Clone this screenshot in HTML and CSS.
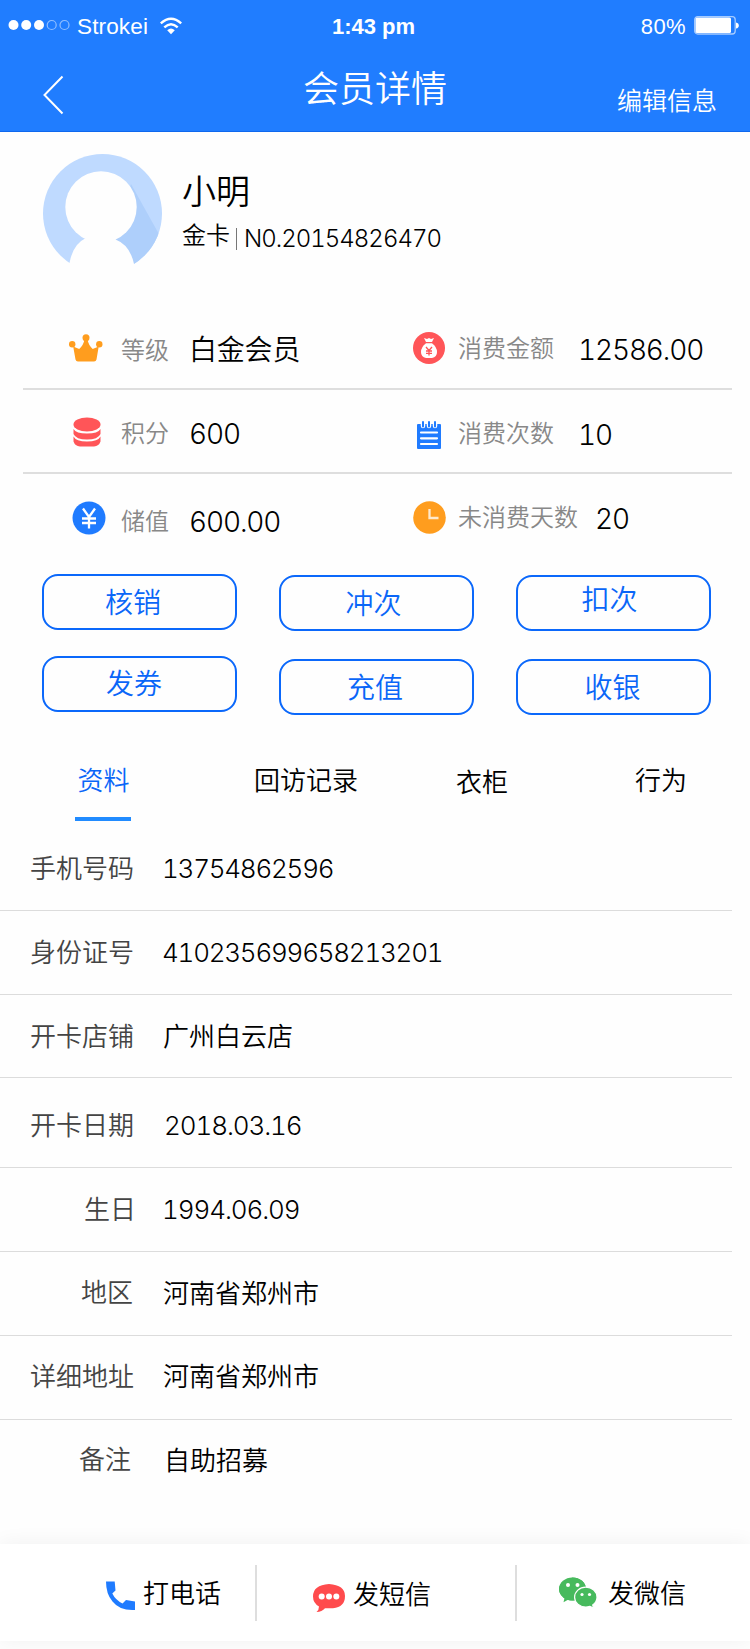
FILE: index.html
```html
<!DOCTYPE html>
<html lang="zh-CN">
<head>
    <meta charset="UTF-8">
    <meta name="viewport" content="width=device-width, initial-scale=1.0">
    <title>会员详情</title>
    <link rel="stylesheet" href="styles.css">
</head>
<body>
    <header class="header">
        <div class="status-bar">
            <div class="carrier">
                <svg class="signal" width="62" height="12" viewBox="0 0 62 12">
                    <g fill="#fff">
                        <circle cx="5.5" cy="6" r="5"/>
                        <circle cx="18.2" cy="6" r="5"/>
                        <circle cx="31" cy="6" r="5"/>
                    </g>
                    <g fill="none" stroke="#fff" stroke-opacity=".5" stroke-width="1.2">
                        <circle cx="43.7" cy="6" r="4.5"/>
                        <circle cx="56.5" cy="6" r="4.5"/>
                    </g>
                </svg>
                <span>Strokei</span>
                <svg class="wifi" width="22" height="18" viewBox="0 0 22 18">
                    <g fill="none" stroke="#fff" stroke-width="2.4">
                        <path d="M.8 6.4Q11-3 21.200 6.400"/>
                        <path d="M4.300 10.300Q11 4 17.700 10.300"/>
                    </g>
                    <path fill="#fff" d="M7.200 13.200Q11 10 14.800 13.200L11 17.200z"/>
                </svg>
            </div>
            <div class="clock">1:43 pm</div>
            <div class="battery">
                <span>80%</span>
                <svg width="45" height="19" viewBox="0 0 45 19">
                    <rect x=".7" y=".7" width="40.500" height="17.300" rx="3" fill="none" stroke="#fff" stroke-opacity=".6" stroke-width="1.300"/>
                    <rect x="1.500" y="1.500" width="35.500" height="15.500" rx="1.500" fill="#fff"/>
                    <path fill="#fff" d="M42 6.500q2.800.5 2.800 3t-2.800 3z"/>
                </svg>
            </div>
        </div>
        <nav class="nav">
            <a class="back" href="#">
                <svg width="21" height="40" viewBox="0 0 21 40">
                    <path d="M19.500 1.500L1.500 20l18 18.500" fill="none" stroke="#fff" stroke-width="2"/>
                </svg>
            </a>
            <h1>会员详情</h1>
            <a class="edit" href="#">编辑信息</a>
        </nav>
    </header>

    <section class="profile">
        <svg class="avatar" width="120" height="111" viewBox="0 0 120 111">
            <defs>
                <clipPath id="round"><circle cx="59.500" cy="59.500" r="59.500"/></clipPath>
            </defs>
            <g clip-path="url(#round)">
                <rect width="120" height="111" fill="#bfdaff"/>
                <path fill="#aecffb" d="M88 30L117 82V111H60z"/>
            </g>
            <circle cx="58" cy="53" r="35.700" fill="#fefefe"/>
            <path fill="#fefefe" d="M43 84Q30 90 26.500 109L21 120H98L91 110Q87 91 72.500 85.500L76 80H38z"/>
        </svg>
        <div class="info">
            <div class="name">小明</div>
            <div class="card">
                <span class="card-type">金卡</span>
                <span class="card-no">N0.20154826470</span>
            </div>
        </div>
    </section>

    <section class="stats">
        <div class="stat-row">
            <div class="stat">
                <svg class="crown" width="34" height="28" viewBox="0 0 34 28">
                    <g fill="#ff9d1e">
                        <circle cx="3.200" cy="10.300" r="3.200"/>
                        <circle cx="17" cy="3.700" r="3.500"/>
                        <circle cx="30.300" cy="10.300" r="3.200"/>
                        <path d="M4.200 12.500l6 2.500Q14.500 11 15.400 6h3.200Q19.500 11 23.700 15l6-2.500L27.500 25.500Q27 27.500 25 27.500H9Q7 27.500 6.500 25.500z"/>
                    </g>
                </svg>
                <span class="label down">等级</span>
                <span class="value level">白金会员</span>
            </div>
            <div class="stat">
                <svg class="bag" width="32" height="32" viewBox="0 0 32 32">
                    <circle cx="16" cy="16" r="16" fill="#ff5558"/>
                    <path fill="#fff" d="M11 6l3 1 2-1 2 1 3-1-2 4h-6z"/>
                    <path fill="#fff" d="M13 11.200h6Q24 15 24 20t-5 6h-6q-5-1-5-6t5-8.800z"/>
                    <path d="M13 15l3 3.500 3-3.500M13 19h6M13 21.300h6M16 18.500v5" fill="none" stroke="#ff5558" stroke-width="1.300"/>
                </svg>
                <span class="label up">消费金额</span>
                <span class="value">12586.00</span>
            </div>
        </div>
        <div class="stat-row">
            <div class="stat">
                <svg class="coins" width="28" height="30" viewBox="0 0 28 30">
                    <g fill="#ff5558">
                        <ellipse cx="14" cy="7.500" rx="13.500" ry="7"/>
                        <path d="M.5 12Q3 16.500 14 16.500T27.500 12v5Q25 22.500 14 22.500T.5 17z"/>
                        <path d="M.5 19.500Q3 24.500 14 24.500T27.500 19.500v5Q26 29 21 29.500H7Q2 29 .5 24.500z"/>
                    </g>
                </svg>
                <span class="label">积分</span>
                <span class="value">600</span>
            </div>
            <div class="stat">
                <svg class="notebook" width="24" height="28" viewBox="0 0 24 28">
                    <path fill="#1f7bff" d="M1 3h22q1 0 1 1v23q0 1-1 1H1q-1 0-1-1V4q0-1 1-1z"/>
                    <g fill="none" stroke-linecap="round">
                        <path d="M6 2v3M12 2v3M18 2v3" stroke="#fefefe" stroke-width="4.500"/>
                        <path d="M6 1v4.500M12 1v4.500M18 1v4.500" stroke="#1f7bff" stroke-width="2"/>
                        <path d="M4 11.500h16M4 17.300h16M4 23h16" stroke="#fff" stroke-width="2.200"/>
                    </g>
                </svg>
                <span class="label">消费次数</span>
                <span class="value down">10</span>
            </div>
        </div>
        <div class="stat-row last">
            <div class="stat">
                <svg class="yen" width="34" height="34" viewBox="0 0 34 34">
                    <circle cx="17" cy="17" r="16.500" fill="#1f7bff"/>
                    <path d="M11 7.500l6 8.500 6-8.500M10 17.500h14M10 22h14M17 16v11.500" fill="none" stroke="#fff" stroke-width="2.300"/>
                </svg>
                <span class="label">储值</span>
                <span class="value">600.00</span>
            </div>
            <div class="stat">
                <svg class="time" width="33" height="33" viewBox="0 0 33 33">
                    <circle cx="16.500" cy="16.500" r="16.300" fill="#ff9d1e"/>
                    <path d="M16.500 8v9h9" fill="none" stroke="#ffe9cc" stroke-width="2.300"/>
                </svg>
                <span class="label idle">未消费天数</span>
                <span class="value idle-days">20</span>
            </div>
        </div>
    </section>

    <section class="actions">
        <div class="action-col">
            <a class="btn verify" href="#">核销</a>
            <a class="btn coupon" href="#">发券</a>
        </div>
        <div class="action-col">
            <a class="btn add" href="#">冲次</a>
            <a class="btn recharge" href="#">充值</a>
        </div>
        <div class="action-col">
            <a class="btn deduct" href="#">扣次</a>
            <a class="btn cashier" href="#">收银</a>
        </div>
    </section>

    <nav class="tabs">
        <a class="tab active" href="#">资料</a>
        <a class="tab visits" href="#">回访记录</a>
        <a class="tab closet" href="#">衣柜</a>
        <a class="tab behavior" href="#">行为</a>
    </nav>

    <dl class="details">
        <div class="row"><dt>手机号码</dt><dd class="num">13754862596</dd></div>
        <div class="row"><dt>身份证号</dt><dd class="num">410235699658213201</dd></div>
        <div class="row store"><dt>开卡店铺</dt><dd>广州白云店</dd></div>
        <div class="row date"><dt>开卡日期</dt><dd class="num">2018.03.16</dd></div>
        <div class="row birthday"><dt>生日</dt><dd class="num">1994.06.09</dd></div>
        <div class="row region"><dt>地区</dt><dd>河南省郑州市</dd></div>
        <div class="row address"><dt>详细地址</dt><dd>河南省郑州市</dd></div>
        <div class="row remark"><dt>备注</dt><dd>自助招募</dd></div>
    </dl>

    <footer class="footer">
        <a class="contact call" href="#">
            <svg width="30" height="30" viewBox="0 0 30 30">
                <path fill="#1f7bff" d="M0 .5H8.700L9.500 9.500 6.300 12.500Q9.500 19 16.500 22.500L20 19l9 1.500V29Q14 30 6.500 20.500 0 13 0 .5z"/>
            </svg>
            <span>打电话</span>
        </a>
        <a class="contact sms" href="#">
            <svg width="32" height="29" viewBox="0 0 32 29">
                <path fill="#ff4b4d" d="M16 0q16 1 16 12T20 24.300h-8Q9 28 3.500 28 6 26 6 22.500 0 19 0 12.500 0 1 16 0z"/>
                <g fill="#fff">
                    <circle cx="8.700" cy="12.500" r="3"/>
                    <circle cx="16" cy="12.500" r="3"/>
                    <circle cx="23.300" cy="12.500" r="3"/>
                </g>
            </svg>
            <span>发短信</span>
        </a>
        <a class="contact wechat" href="#">
            <svg width="38" height="32" viewBox="0 0 38 32">
                <g fill="#47ba5d">
                    <path d="M13.500.5C21 .5 27 5.500 27 12s-6 11.500-13.500 11.500q-2.500 0-4.500-.7l-4.500 2.400 1-4.200Q0 17.500 0 12 0 5.500 13.500.5z"/>
                    <ellipse cx="13.500" cy="12" rx="13.500" ry="11.500"/>
                    <path stroke="#fefefe" stroke-width="1.200" d="M26.800 10.200c6.300 0 11.200 4.600 11.200 10 0 3.400-1.700 6-4.300 7.900l.9 3-3.700-1.800q-2 .7-4.100.7c-6.300 0-11.200-4.400-11.200-9.800s4.900-10 11.200-10z"/>
                </g>
                <g fill="#fff">
                    <circle cx="9" cy="8" r="2"/>
                    <circle cx="18.500" cy="8" r="2"/>
                    <circle cx="23" cy="17.500" r="1.600"/>
                    <circle cx="30.500" cy="17.500" r="1.600"/>
                </g>
            </svg>
            <span>发微信</span>
        </a>
    </footer>
</body>
</html>
```
FILE: styles.css
```css
* {
    box-sizing: border-box;
}

body {
    margin: 0;
    width: 750px;
    height: 1649px;
    background-color: #fefefe;
    color: #000;
    font-family: Inter, "Noto Sans CJK SC", sans-serif;
    font-weight: 350;
    font-size: 26px;
    line-height: 30px;
    font-feature-settings: "tnum";
    overflow: hidden;
}

a {
    color: inherit;
    text-decoration: none;
}

svg {
    display: block;
    flex: none;
}

/* header */
.header {
    height: 132px;
    background-color: #207dff;
    border-bottom: 1px solid #0f68ee;
    color: #fff;
}

.status-bar {
    display: grid;
    grid-template-columns: 1fr auto 1fr;
    height: 52px;
    padding: 0 11px 0 8px;
    font-family: "Liberation Sans", sans-serif;
    font-weight: 400;
    font-size: 22.5px;
    line-height: 54px;
}

.carrier,
.battery {
    display: flex;
}

.carrier {
    letter-spacing: 0.15px;
}

.signal {
    margin: 19px 7px 0 0;
}

.wifi {
    margin: 17px 0 0 12px;
}

.clock {
    font-weight: bold;
    font-size: 22px;
}

.battery {
    justify-content: flex-end;
    font-size: 22px;
    letter-spacing: 0.4px;
}

.battery svg {
    margin: 16px 0 0 8px;
}

.nav {
    display: grid;
    grid-template-columns: 1fr 144px 1fr;
    padding: 0 33px;
}

.back {
    padding: 23px 0 0 10px;
}

.nav h1 {
    margin: 17px 0 0;
    font-weight: 350;
    font-size: 36px;
    line-height: 40px;
}

.edit {
    justify-self: end;
    padding-top: 34px;
    font-size: 25px;
}

/* profile */
.profile {
    display: flex;
    height: 174px;
    padding: 22px 0 0 43px;
}

.info {
    padding: 18px 0 0 19px;
}

.name {
    font-size: 34px;
    line-height: 40px;
}

.card {
    display: flex;
    margin-top: 9px;
    font-size: 24px;
}

.card-type {
    height: 30px;
    padding-right: 6px;
}

.card-no {
    height: 22px;
    margin-top: 7px;
    padding-left: 7px;
    border-left: 1px solid #777;
    font-weight: 300;
    line-height: 22px;
    letter-spacing: -1px;
}

/* stats */
.stats {
    padding: 0 18px 0 23px;
}

.stat-row {
    display: grid;
    grid-template-columns: 343px 1fr;
    height: 84px;
    border-bottom: 2px solid #dedede;
}

.stat-row.last {
    border-bottom: 0;
}

.stat {
    display: grid;
    grid-template-columns: 52px 68px 1fr;
    align-items: center;
    padding: 5px 0 0 46px;
}

.stat + .stat {
    grid-template-columns: 45px 120px 1fr;
    padding-left: 47px;
}

.crown,
.bag {
    margin-bottom: 4px;
}

.label {
    color: #888;
    font-size: 24px;
}

.value {
    font-weight: 300;
    font-size: 28px;
    letter-spacing: -1.15px;
    white-space: nowrap;
}

.value.level {
    font-weight: 350;
    letter-spacing: -0.2px;
}

.label.down,
.value.down {
    padding-top: 2px;
}

.label.up {
    padding-bottom: 2px;
}

.coins {
    margin: 0 0 4px 4px;
}

.notebook {
    margin: 2px 0 0 4px;
}

.last .stat {
    padding-top: 11px;
}

.yen {
    margin: 0 0 8px 3px;
}

.time {
    margin-bottom: 8px;
}

.last .stat + .stat {
    grid-template-columns: 45px 137px 1fr;
}

.last .label {
    padding-top: 1px;
}

.last .label.idle {
    padding: 0 0 8px;
}

.idle-days {
    padding-bottom: 5px;
}

/* actions */
.actions {
    display: grid;
    grid-template-columns: repeat(3, 195px);
    column-gap: 42px;
    height: 202px;
    padding: 16px 0 0 42px;
    color: #0a66f8;
    font-size: 28px;
}

.action-col {
    display: flex;
    flex-direction: column;
    gap: 28px;
    padding-top: 1px;
}

.action-col:first-child {
    gap: 26px;
    padding-top: 0;
}

.btn {
    height: 56px;
    border: 2px solid #0b68fb;
    border-radius: 16px;
    line-height: 54px;
    text-align: center;
}

.verify {
    padding-right: 13px;
}

.coupon {
    padding-right: 11px;
    line-height: 52px;
}

.add {
    padding-right: 6px;
}

.recharge {
    padding-right: 3px;
}

.deduct {
    padding-right: 8px;
    line-height: 46px;
}

.cashier {
    padding-right: 2px;
}

/* tabs */
.tabs {
    display: flex;
    height: 67px;
    padding: 6px 0 0 75px;
}

.tab.active {
    width: 56px;
    height: 55px;
    padding-left: 1px;
    border-bottom: 4px solid #218bff;
    color: #0a66f8;
    text-align: center;
}

.visits {
    margin-left: 123px;
}

.closet {
    margin: 2px 0 0 98px;
}

.behavior {
    margin-left: 127px;
}

/* details */
.details {
    margin: 0;
    width: 732px;
}

.row {
    display: flex;
    align-items: center;
    height: 84px;
    padding-top: 1px;
    border-bottom: 1px solid #dcdcdc;
}

.row dt {
    width: 134px;
    color: #444;
    text-align: right;
}

.row dd {
    margin: 0 0 0 29px;
}

.row .num {
    margin-left: 28px;
    font-weight: 300;
    letter-spacing: -1.25px;
}

.row.store {
    height: 83px;
    padding-top: 2px;
}

.row.date {
    height: 90px;
    padding-top: 6px;
}

.row.date .num {
    margin-left: 30px;
    letter-spacing: -1.1px;
}

.birthday dt {
    width: 136px;
}

.row.birthday .num {
    margin-left: 26px;
    letter-spacing: -1.1px;
}

.region dt,
.address dt {
    margin-top: -3px;
}

.region dt {
    width: 133px;
}

.row.region dd {
    margin-left: 30px;
}

.address dd {
    margin-top: -2px;
}

.row.remark {
    height: 78px;
    padding-top: 3px;
    border-bottom: 0;
}

.remark dt {
    width: 131px;
    margin-top: -2px;
}

.remark dd {
    margin: 1px 0 0 33px;
}

/* footer */
.footer {
    display: grid;
    grid-template-columns: 257px 260px 1fr;
    align-items: center;
    height: 97px;
    margin-top: 46px;
    background-color: #fff;
    box-shadow: 0 0 20px rgba(0, 0, 0, 0.06);
}

.contact {
    display: flex;
    align-items: center;
    height: 56px;
    border-right: 2px solid #dedede;
}

.call {
    padding-left: 106px;
}

.call svg {
    margin: 6px 7px 0 0;
}

.sms {
    padding-left: 56px;
}

.sms svg {
    margin: 12px 8px 0 0;
}

.sms span {
    margin-top: 4px;
}

.wechat {
    padding-left: 42px;
    border-right: 0;
}

.wechat svg {
    margin-right: 11px;
}

.call span,
.wechat span {
    margin-top: 2px;
}
```
